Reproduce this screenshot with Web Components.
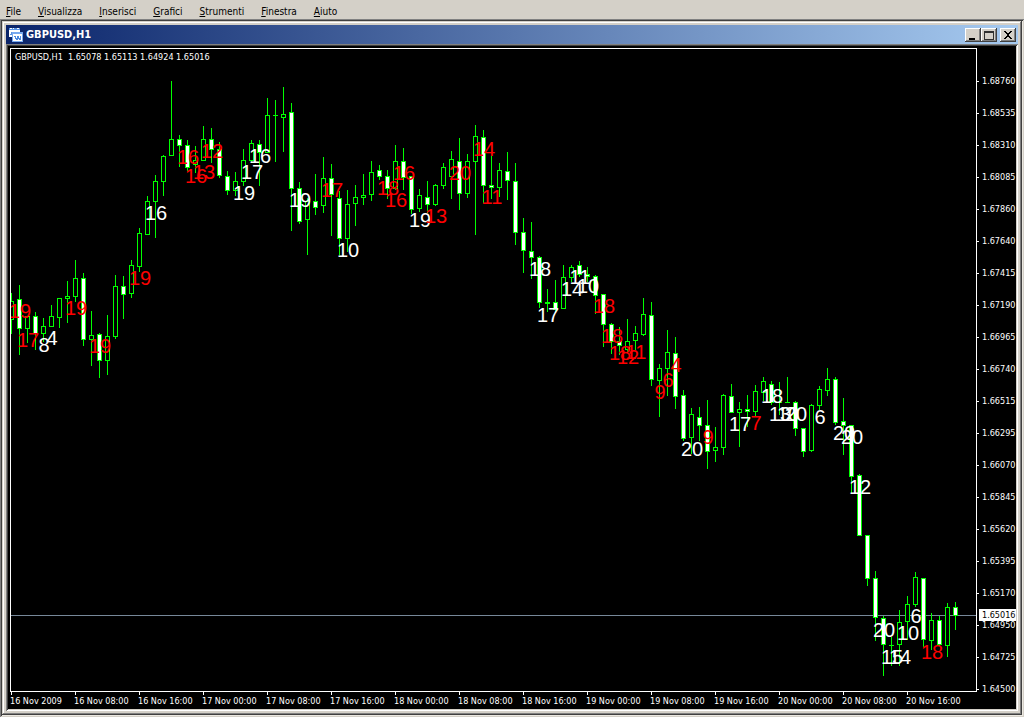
<!DOCTYPE html>
<html lang="it">
<head>
<meta charset="utf-8">
<title>GBPUSD,H1</title>
<style>
  html, body { margin: 0; background: #d4d0c8; }
  body { font-family: "DejaVu Sans Condensed", "DejaVu Sans", sans-serif; font-size: 10px; line-height: 12px; }
</style>
</head>
<body>
<trading-app></trading-app>
<script>
class BaseElement extends HTMLElement {
  mount(html) {
    const root = this.attachShadow({ mode: "open" });
    const t = document.createElement("template");
    t.innerHTML = html;
    root.append(t.content.cloneNode(true));
    return root;
  }
}

class MenuBar extends BaseElement {
  connectedCallback() {
    this.mount(`<style>
      :host { display: flex; gap: 17px; padding: 6px 6px 1px; background: #d4d0c8; }
    </style><slot></slot>`);
  }
}

class MenuItem extends BaseElement {
  connectedCallback() {
    this.mount(`<style>
      :host { display: block; }
      button { display: block; margin: 0; padding: 0; border: 0; background: none; color: #000; font: inherit; }
    </style><button type="button"><slot></slot></button>`);
  }
}

class WindowButton extends BaseElement {
  connectedCallback() {
    const shapes = {
      min: '<path d="M4 10h6v2h-6z"/>',
      max: '<path d="M3 3h10v9h-10z M4 5v6h8v-6z" fill-rule="evenodd" fill="#303030"/>',
      close: '<path d="M4 3h2v1h1v1h2v-1h1v-1h2v1h-1v1h-1v1h-1v2h1v1h1v1h1v1h-2v-1h-1v-1h-2v1h-1v1h-2v-1h1v-1h1v-1h1v-2h-1v-1h-1v-1h-1z"/>'
    };
    this.mount(`<style>
      :host { display: block; }
      button { display: block; width: 16px; height: 14px; margin: 0; padding: 0; border: 0; background: #d4d0c8;
        box-shadow: inset -1px -1px #404040, inset 1px 1px #fff, inset -2px -2px #808080; }
      svg { display: block; }
    </style><button type="button" aria-label="${this.getAttribute("label")}">
      <svg width="16" height="14" shape-rendering="crispEdges">${shapes[this.getAttribute("kind")]}</svg></button>`);
  }
}

class ChartWindow extends BaseElement {
  connectedCallback() {
    this.mount(`<style>
      :host { display: flex; flex-direction: column; flex: 1; padding: 4px; background: #d4d0c8;
        box-shadow: inset -1px -1px #404040, inset 1px 1px #d4d0c8, inset -2px -2px #808080, inset 2px 2px #fff; }
      header { display: flex; align-items: center; height: 19px; padding: 0 2px 0 3px;
        background: linear-gradient(90deg, #0a246a, #a6caf0); color: #fff; }
      h1 { flex: 1; margin: 0 0 0 3px; font-size: 11px; line-height: 19px; font-weight: bold; }
      .pair { display: flex; margin-right: 3px; }
      .client { display: flex; flex: 1; padding: 2px; background: #000;
        box-shadow: inset 1px 1px #808080, inset -1px -1px #fff, inset 2px 2px #404040, inset -2px -2px #d4d0c8; }
    </style>
    <header>
      <svg width="14" height="14" viewBox="0 0 14 14" shape-rendering="crispEdges" aria-hidden="true">
        <path d="M0 0h11v9h-11z" fill="#5b95e6"/><path d="M0 2h11v7h-11z" fill="#fff"/>
        <path d="M1 0h2v1h-2zM4 0h1v1h-1zM8 0h2v1h-2z" fill="#fff"/>
        <path d="M1 6h1v-2h1v2h1v1h1v-3h1" fill="none" stroke="#5b95e6"/>
        <path d="M3 4h11v10h-11z" fill="#78aaf0"/><path d="M4 6h9v7h-9z" fill="#fff"/>
        <path d="M5 8h1v2h1v1h1v-3h1v2h1v1h1v-3h1" fill="none" stroke="#4f8be0"/>
      </svg>
      <h1>${this.getAttribute("heading")}</h1>
      <div class="pair">
        <window-button kind="min" label="Riduci a icona"></window-button>
        <window-button kind="max" label="Ingrandisci"></window-button>
      </div>
      <window-button kind="close" label="Chiudi"></window-button>
    </header>
    <div class="client"><slot></slot></div>`);
  }
}

// Each bar: high, body top, body bottom, low, falling (1) or rising (0). Bars are 8px apart.
const BARS = [
[293,301,320,334,0],[285,299,329,355,1],[316,316,329,343,0],[312,316,334,350,1],[318,326,334,342,0],[305,316,327,327,0],
[298,298,318,328,0],[281,296,299,323,0],[260,278,297,302,0],[273,278,340,346,1],[311,335,340,366,0],[333,334,361,378,1],
[315,336,361,375,0],[275,286,337,339,0],[276,286,295,319,1],[260,265,294,298,0],[228,233,267,272,0],[196,201,235,235,0],
[175,181,202,238,0],[155,156,182,196,0],[81,139,156,156,0],[135,139,146,167,1],[140,145,168,171,1],[146,160,165,173,0],
[126,139,161,161,0],[128,139,150,163,1],[142,149,176,178,1],[171,176,191,195,1],[172,181,191,196,0],[149,160,182,186,0],
[140,143,161,163,0],[140,144,153,186,1],[98,115,153,153,0],[100,115,116,162,0],[87,114,118,152,0],[103,112,189,231,1],
[182,188,222,224,1],[198,201,220,255,0],[174,201,208,215,1],[157,178,206,213,0],[164,178,195,236,1],[191,198,239,255,1],
[190,204,239,252,0],[185,197,204,226,0],[174,195,198,205,0],[161,172,195,201,0],[165,170,177,180,1],[170,176,189,199,1],
[145,161,189,190,0],[148,161,178,190,1],[176,176,210,214,1],[189,195,209,212,0],[181,197,205,213,1],[184,185,205,206,0],
[163,167,186,189,0],[151,159,177,199,0],[138,161,194,210,1],[154,161,194,198,0],[125,136,162,235,0],[130,137,186,204,1],
[145,185,188,199,1],[163,170,188,197,0],[152,171,181,200,1],[163,181,233,245,1],[218,232,251,273,1],[222,251,258,279,1],
[256,257,303,308,1],[289,302,304,312,1],[280,302,310,312,1],[265,277,309,309,0],[265,267,278,282,0],[261,265,275,277,1],
[267,274,277,282,1],[275,276,296,314,1],[294,294,325,347,1],[323,324,342,354,1],[327,341,346,355,1],[319,341,350,353,0],
[326,333,341,350,0],[298,314,335,336,0],[302,315,380,386,1],[364,368,381,417,0],[330,352,369,396,0],[337,353,397,409,1],
[390,395,439,441,1],[408,414,438,454,0],[407,417,426,441,1],[400,425,452,469,1],[427,447,451,462,0],[394,395,448,455,0],
[384,396,413,413,1],[402,409,413,447,0],[395,409,412,427,1],[385,391,412,417,0],[377,381,393,401,0],[381,384,403,405,1],
[382,402,403,415,0],[377,402,403,403,0],[401,402,429,436,1],[428,428,452,457,1],[404,405,451,452,0],[386,389,406,410,0],
[368,379,391,396,0],[377,379,423,425,1],[398,421,426,455,1],[425,425,477,493,1],[474,475,536,536,1],[535,535,579,586,1],
[571,578,618,641,1],[616,618,645,676,1],[637,645,646,666,0],[610,622,645,666,0],[596,604,622,640,0],[572,577,605,607,0],
[578,578,640,647,1],[613,620,641,650,0],[616,620,645,646,1],[603,607,646,657,0],[602,607,616,630,1]];

// Each mark: bar index, baseline, number, colour (r = red, w = white).
const MARKS = [
[1,318,19,"r"],[2,347,17,"r"],[4,352,8,"w"],[5,345,4,"w"],[8,315,19,"r"],[11,353,19,"r"],[16,285,19,"r"],[18,220,16,"w"],
[22,164,16,"r"],[23,183,16,"r"],[24,179,13,"r"],[25,158,12,"r"],[29,200,19,"w"],[30,179,17,"w"],[31,163,16,"w"],
[36,207,19,"w"],[40,197,17,"r"],[42,257,10,"w"],[47,195,18,"r"],[48,207,16,"r"],[49,180,16,"r"],[51,227,19,"w"],
[53,223,13,"r"],[56,180,20,"r"],[59,156,14,"r"],[60,204,11,"r"],[66,276,18,"w"],[67,322,17,"w"],[70,296,14,"w"],
[71,284,11,"w"],[72,293,10,"w"],[74,313,18,"r"],[75,343,18,"r"],[76,360,18,"r"],[77,364,12,"r"],[78,359,11,"r"],
[81,399,9,"r"],[82,387,6,"r"],[83,372,4,"r"],[85,456,20,"w"],[87,444,9,"r"],[91,431,17,"w"],[93,430,7,"r"],
[95,403,18,"w"],[96,421,13,"w"],[97,421,10,"w"],[98,421,20,"w"],[101,424,6,"w"],[104,440,20,"w"],[105,444,20,"w"],
[106,494,12,"w"],[109,637,20,"w"],[110,664,15,"w"],[111,664,14,"w"],[112,640,10,"w"],[113,623,6,"w"],[115,659,18,"r"]];

class CandlePlot extends BaseElement {
  connectedCallback() {
    const bars = BARS.map(([hi, top, bot, lo, down], i) => {
      const x = 11 + i * 8;
      const inner = bot - top > 2
        ? `<rect x="${x - 1}" y="${top + 1}" width="3" height="${bot - top - 2}" fill="${down ? "#fff" : "#000"}"/>` : "";
      return `<rect x="${x}" y="${hi}" width="1" height="${lo - hi}"/><rect x="${x - 2}" y="${top}" width="5" height="${bot - top}"/>${inner}`;
    }).join("");
    const marks = MARKS.map(([i, y, n, c]) =>
      `<text x="${12 + i * 8}" y="${y}" fill="${c === "r" ? "#f00" : "#fff"}">${n}</text>`).join("");
    this.mount(`<style>
      :host { display: block; position: relative; border: 1px solid #fff; overflow: hidden; color: #fff; min-height: 642px; }
      p { margin: 2px 0 0 4px; font-size: 9px; white-space: pre; }
      svg { position: absolute; top: 0; left: 0; width: 100%; height: 100%; }
      text { font: 20px "Liberation Sans", Arial, sans-serif; text-anchor: middle; }
    </style>
    <p><slot></slot></p>
    <svg role="img" aria-label="GBPUSD H1">
      <g shape-rendering="crispEdges">
        <rect x="0" y="566" width="100%" height="1" fill="#778899"/>
        <g transform="translate(-11 -49)" fill="#0f0">${bars}</g>
      </g>
      <g transform="translate(-11 -49)">${marks}</g>
    </svg>`);
  }
}

class PriceScale extends BaseElement {
  connectedCallback() {
    const prices = this.getAttribute("prices").split(" ");
    this.mount(`<style>
      :host { display: block; position: relative; padding-top: 17px; color: #fff; font-size: 9px; }
      .row { display: flex; align-items: center; gap: 3px; height: 32px; }
      .row::before { content: ""; width: 2px; height: 1px; background: #fff; }
      .now { position: absolute; top: 561px; left: 2px; right: 0; padding-left: 3px; height: 12px; background: #fff; color: #000; }
    </style>${prices.map(p => `<div class="row">${p}</div>`).join("")}
    <div class="now">${this.getAttribute("current")}</div>`);
  }
}

class TimeScale extends BaseElement {
  connectedCallback() {
    const times = this.getAttribute("times").split(",");
    this.mount(`<style>
      :host { display: flex; overflow: hidden; color: #fff; font-size: 9px; }
      .slot { flex: 0 0 64px; white-space: nowrap; }
      .slot::before { content: ""; display: block; width: 1px; height: 3px; margin-left: 1px; background: #fff; }
    </style>${times.map(t => `<div class="slot">${t}</div>`).join("")}`);
  }
}

class PriceChart extends BaseElement {
  connectedCallback() {
    this.mount(`<style>
      :host { display: grid; flex: 1; grid-template-columns: 1fr 39px; grid-template-rows: 1fr 17px; padding: 2px 0 0 2px; }
      price-scale { grid-row: 1 / 3; grid-column: 2; height: 0; }
    </style>
    <candle-plot>GBPUSD,H1  1.65078 1.65113 1.64924 1.65016</candle-plot>
    <price-scale current="1.65016" prices="1.68760 1.68535 1.68310 1.68085 1.67860 1.67640 1.67415 1.67190 1.66965 1.66740 1.66515 1.66295 1.66070 1.65845 1.65620 1.65395 1.65170 1.64950 1.64725 1.64500"></price-scale>
    <time-scale times="16 Nov 2009,16 Nov 08:00,16 Nov 16:00,17 Nov 00:00,17 Nov 08:00,17 Nov 16:00,18 Nov 00:00,18 Nov 08:00,18 Nov 16:00,19 Nov 00:00,19 Nov 08:00,19 Nov 16:00,20 Nov 00:00,20 Nov 08:00,20 Nov 16:00"></time-scale>`);
  }
}

class TradingApp extends BaseElement {
  connectedCallback() {
    this.mount(`<style>
      :host { display: flex; flex-direction: column; min-height: 100vh; }
      main { display: flex; flex: 1; padding: 2px; background: #d4d0c8;
        box-shadow: inset 1px 1px #808080, inset -1px -1px #d4d0c8, inset 2px 2px #404040, inset -2px -2px #ece9e2; }
    </style>
    <menu-bar>
      <menu-item><u>F</u>ile</menu-item><menu-item><u>V</u>isualizza</menu-item><menu-item><u>I</u>nserisci</menu-item>
      <menu-item><u>G</u>rafici</menu-item><menu-item><u>S</u>trumenti</menu-item><menu-item><u>F</u>inestra</menu-item>
      <menu-item><u>A</u>iuto</menu-item>
    </menu-bar>
    <main><chart-window heading="GBPUSD,H1"><price-chart></price-chart></chart-window></main>`);
  }
}

customElements.define("menu-bar", MenuBar);
customElements.define("menu-item", MenuItem);
customElements.define("window-button", WindowButton);
customElements.define("chart-window", ChartWindow);
customElements.define("candle-plot", CandlePlot);
customElements.define("price-scale", PriceScale);
customElements.define("time-scale", TimeScale);
customElements.define("price-chart", PriceChart);
customElements.define("trading-app", TradingApp);
</script>
</body>
</html>
